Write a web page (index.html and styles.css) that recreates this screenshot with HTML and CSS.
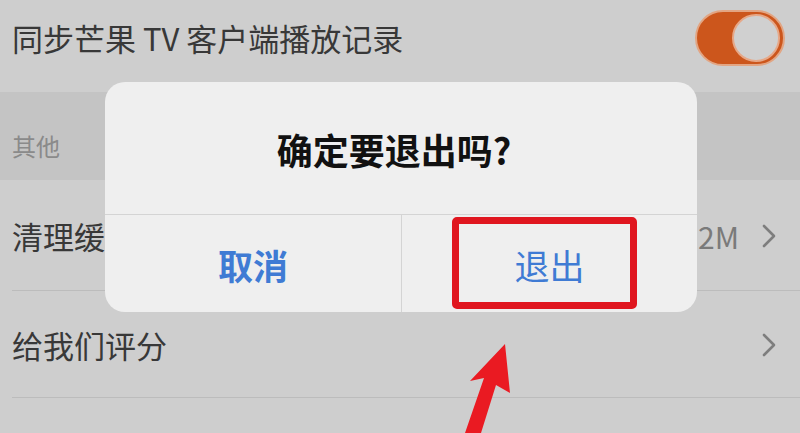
FILE: index.html
```html
<!DOCTYPE html>
<html lang="zh-CN">
<head>
<meta charset="utf-8">
<title>退出确认</title>
<link rel="stylesheet" href="styles.css">
</head>
<body>
<div class="screen">
  <div class="list">
    <div class="row row-top">
      <span class="label">同步芒果 TV 客户端播放记录</span>
      <div class="toggle"><div class="knob"></div></div>
    </div>
    <div class="section"><span>其他</span></div>
    <div class="row row-line">
      <span class="label">清理缓存</span>
      <div class="right"><span class="value">12.2M</span>
        <svg class="chev" viewBox="0 0 16 24" width="16" height="24"><polyline points="3,2 13,12 3,22" /></svg>
      </div>
    </div>
    <div class="row row-line">
      <span class="label">给我们评分</span>
      <div class="right">
        <svg class="chev" viewBox="0 0 16 24" width="16" height="24"><polyline points="3,2 13,12 3,22" /></svg>
      </div>
    </div>
    <div class="row row-last"></div>
  </div>

  <div class="dialog">
    <div class="dialog-title">确定要退出吗?</div>
    <div class="dialog-actions">
      <div class="btn btn-cancel">取消</div>
      <div class="btn btn-ok">退出</div>
    </div>
  </div>

  <div class="highlight"></div>

  <svg class="arrow" viewBox="0 0 800 433" width="800" height="433">
    <polygon points="505,344 510,393 496,385 481,433 465,433 484,378 470,381" />
  </svg>
</div>
</body>
</html>
```

FILE: styles.css
```css
* { box-sizing: border-box; }
html, body { margin: 0; padding: 0; }
body {
  width: 800px;
  height: 433px;
  overflow: hidden;
  background: #cecece;
  font-family: "Noto Sans CJK SC", "Noto Sans", sans-serif;
}
.screen {
  position: relative;
  width: 800px;
  height: 433px;
  overflow: hidden;
}
.list {
  display: flex;
  flex-direction: column;
}
.row {
  display: flex;
  align-items: center;
  justify-content: space-between;
  padding: 0 23px 0 12px;
  color: #383838;
}
.label {
  font-size: 31px;
  line-height: 1.2;
}
.row-top {
  height: 92px;
  padding: 0 15px 16px 12px;
}
.toggle {
  width: 90px;
  height: 56px;
  border-radius: 28px;
  background: #cc561c;
  border: 2px solid #e2a583;
  display: flex;
  align-items: center;
  justify-content: flex-end;
  padding-right: 3px;
}
.knob {
  width: 48px;
  height: 48px;
  border-radius: 50%;
  background: #d0d0d0;
  border: 2px solid #e6a888;
}
.section {
  height: 88px;
  background: #c4c4c4;
  display: flex;
  align-items: flex-end;
  padding: 0 12px 19px;
  color: #8a8a8a;
  font-size: 24px;
  line-height: 1.2;
}
.row-line {
  height: 111px;
  position: relative;
}
.row-line + .row-line { height: 107px; }
.row-line::after {
  content: "";
  position: absolute;
  left: 12px;
  right: 0;
  bottom: 0;
  height: 1px;
  background: #bcbcbc;
}
.right {
  display: flex;
  align-items: center;
  gap: 22px;
}
.value {
  font-size: 30px;
  color: #7a7a7a;
  line-height: 1.2;
}
.chev polyline {
  fill: none;
  stroke: #7e7e7e;
  stroke-width: 2.6;
  stroke-linecap: round;
  stroke-linejoin: round;
}
.row-last { height: 40px; }

.dialog {
  position: absolute;
  left: 105px;
  top: 82px;
  width: 592px;
  height: 230px;
  border-radius: 20px;
  background: #efefef;
  display: flex;
  flex-direction: column;
}
.dialog-title {
  height: 132px;
  display: flex;
  align-items: center;
  justify-content: center;
  font-size: 36px;
  font-weight: 700;
  color: #111;
  padding: 2px 14px 0 0;
}
.dialog-actions {
  flex: 1;
  display: grid;
  grid-template-columns: 297px 1fr;
  border-top: 1px solid #d4d4d4;
}
.btn {
  display: flex;
  align-items: center;
  justify-content: center;
  font-size: 35px;
  color: #3f7bd4;
  padding-top: 2px;
}
.btn-cancel {
  border-right: 1px solid #d4d4d4;
  font-weight: 700;
}
.btn-ok { font-weight: 400; }

.highlight {
  position: absolute;
  left: 452px;
  top: 217px;
  width: 185px;
  height: 92px;
  border: 7px solid #e0161f;
  border-radius: 5px;
}
.arrow {
  position: absolute;
  left: 0;
  top: 0;
}
.arrow polygon { fill: #ea1a22; }
```
